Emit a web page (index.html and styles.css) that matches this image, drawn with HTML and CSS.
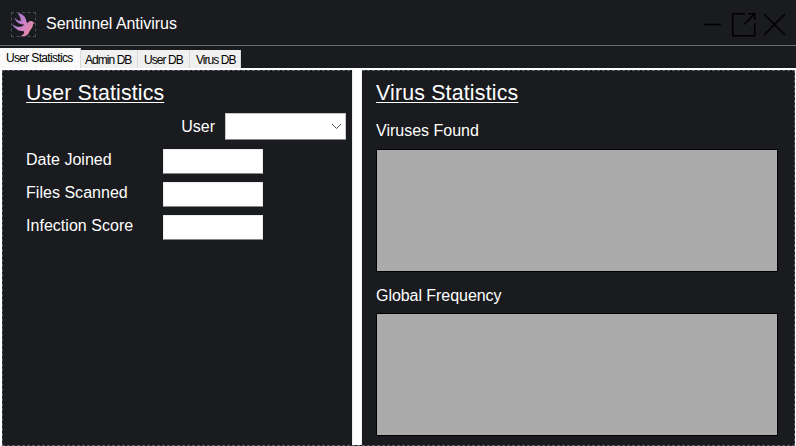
FILE: index.html
```html
<!DOCTYPE html>
<html lang="en">
<head>
<meta charset="utf-8">
<title>Sentinnel Antivirus</title>
<link rel="stylesheet" href="styles.css">
</head>
<body>
<header class="titlebar">
  <div class="logo">
    <svg width="25" height="25" viewBox="0 0 25 25">
      <defs><linearGradient id="bird" x1="0" y1="0.2" x2="1" y2="0.8"><stop offset="0" stop-color="#8f70cf"/><stop offset=".5" stop-color="#cf82c8"/><stop offset="1" stop-color="#f08a98"/></linearGradient></defs>
      <path fill="url(#bird)" d="M6.500 1C11 1.500 14.800 4.500 15.300 9C15.500 10.800 16.500 11.200 17.300 10.400C18 9 19.200 8.700 20.500 9C21.800 9.500 22.500 10.200 24.200 11C22.500 11.200 21.900 12.200 21.800 13.500C21.500 16.500 19 17.800 18.200 20C17.300 22.500 15.500 24 13 24.200H8.500C12 23.300 13.500 21.500 13 19.200C8 19.500 3.500 17 1 11.500C3.500 14 6 15 9 14.800C11.500 14.500 12.500 13.700 13.200 12.500C8.500 12.500 4.500 10 3.500 5.500C5.500 8 7.500 9 10 9C9.500 6 8.500 3 6.500 1Z"/>
    </svg>
  </div>
  <h1 class="app-name">Sentinnel Antivirus</h1>
  <svg class="controls" width="86" height="30" viewBox="0 0 86 30" fill="none" stroke="#000">
    <path stroke-width="1.500" d="M1 14.500H18"/>
    <path stroke-width="1.500" d="M42 3.700H29.700V25.700H51.700V13.500M45 3.700H51.700V10M51.500 4L41 14.500"/>
    <path stroke-width="1.500" d="M61 4L82 25M82 4L61 25"/>
  </svg>
</header>
<nav class="tabs">
  <span class="tab active">User Statistics</span>
  <span class="tab admin">Admin DB</span>
  <span class="tab user">User DB</span>
  <span class="tab virus">Virus DB</span>
</nav>
<main class="page">
  <section class="pane user-pane">
    <h2>User Statistics</h2>
    <div class="select-row">
      <span>User</span>
      <div class="select"><svg width="11" height="7" viewBox="0 0 11 7"><path d="M1 1L5.500 5.500L10 1" fill="none" stroke="#555"/></svg></div>
    </div>
    <div class="field"><span>Date Joined</span><div class="input"></div></div>
    <div class="field"><span>Files Scanned</span><div class="input"></div></div>
    <div class="field"><span>Infection Score</span><div class="input"></div></div>
  </section>
  <div class="splitter"></div>
  <section class="pane virus-pane">
    <h2>Virus Statistics</h2>
    <h3>Viruses Found</h3>
    <div class="grid"></div>
    <h3 class="second">Global Frequency</h3>
    <div class="grid"></div>
  </section>
</main>
</body>
</html>
```
FILE: styles.css
```css
* { box-sizing: border-box; }
body {
  margin: 0;
  width: 796px;
  height: 446px;
  overflow: hidden;
  display: flex;
  flex-direction: column;
  background: #1a1b1e;
  color: #fff;
  font: 16px/18px "Liberation Sans", sans-serif;
}
h1, h2, h3 { margin: 0; font-weight: 400; }
.titlebar {
  height: 46px;
  flex: none;
  display: flex;
  align-items: flex-start;
  border-bottom: 1px solid #6b6b6b;
}
.logo {
  width: 25px;
  height: 25px;
  margin: 12px 0 0 11px;
  outline: 1px dashed #4a505a;
  outline-offset: -1px;
}
.logo svg, .controls { display: block; }
.app-name { font-size: 16px; line-height: 18px; margin: 15px 0 0 10px; letter-spacing: -.04px; }
.controls { margin: 10px 7px 0 auto; }
.tabs {
  height: 22px;
  flex: none;
  display: flex;
  align-items: flex-end;
}
.tab {
  height: 18px;
  padding: 4px 0 0 4px;
  background: #f0f0f0;
  border-right: 1px solid #d9d9d9;
  color: #000;
  font-size: 12px;
  line-height: 13px;
  letter-spacing: -.95px;
  white-space: nowrap;
}
.active { width: 81px; height: 20px; padding: 4px 0 0 6px; background: #f9f9f9; letter-spacing: -.67px; }
.admin { width: 57px; }
.user { width: 52px; padding-left: 6px; }
.virus { width: 51px; padding-left: 6px; }
.page {
  flex: 1;
  display: flex;
  position: relative;
  border: solid #fff;
  border-width: 2px 1px 0 2px;
}
.page::after {
  content: "";
  position: absolute;
  inset: 0;
  border: 1px dashed #555b66;
}
h2 {
  font-size: 21.333px;
  line-height: 24px;
  letter-spacing: .13px;
  text-decoration: underline;
  text-decoration-thickness: 1px;
  text-underline-offset: 2px;
}
.user-pane { width: 350px; padding: 11px 0 0 24px; }
.select-row {
  display: flex;
  align-items: center;
  justify-content: flex-end;
  gap: 10px;
  height: 27px;
  margin: 8px 6px 9px 0;
}
.select {
  width: 121px;
  height: 27px;
  display: flex;
  align-items: center;
  justify-content: flex-end;
  padding-right: 3px;
  background: #fff;
  border: 1px solid #c8c8c8;
  border-bottom-color: #868686;
  border-radius: 1px;
}
.field { display: flex; height: 25px; margin-bottom: 8px; }
.field span { width: 137px; padding-top: 2px; letter-spacing: .03px; }
.input {
  width: 100px;
  background: #fff;
  border: 1px solid #ececec;
  border-bottom-color: #868686;
  border-radius: 1px;
}
.splitter {
  position: relative;
  z-index: 1;
  width: 10px;
  margin-bottom: 1px;
  background: #fff;
  border: solid #eee;
  border-width: 0 1px;
}
.virus-pane { flex: 1; padding: 11px 17px 0 14px; }
.virus-pane h2 { letter-spacing: .18px; }
h3 { font-size: 16px; line-height: 18px; margin: 17px 0 9px; }
.grid { height: 123px; background: #ababab; border: 1px solid #000; }
.second { margin: 15px 0 8px; letter-spacing: -.05px; }
```
